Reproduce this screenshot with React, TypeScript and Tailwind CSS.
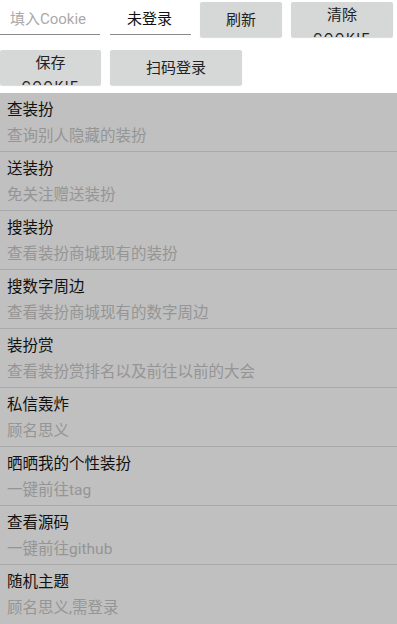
import React from 'react';

const items = [
  { title: '查装扮', desc: '查询别人隐藏的装扮' },
  { title: '送装扮', desc: '免关注赠送装扮' },
  { title: '搜装扮', desc: '查看装扮商城现有的装扮' },
  { title: '搜数字周边', desc: '查看装扮商城现有的数字周边' },
  { title: '装扮赏', desc: '查看装扮赏排名以及前往以前的大会' },
  { title: '私信轰炸', desc: '顾名思义' },
  { title: '晒晒我的个性装扮', desc: '一键前往tag' },
  { title: '查看源码', desc: '一键前往github' },
  { title: '随机主题', desc: '顾名思义,需登录' },
];

const Btn: React.FC<{ label: string; sub?: string; className?: string }> = ({ label, sub, className }) => (
  <button
    className={
      'h-[35px] bg-[#d6d7d7] rounded-[2px] shadow-[0_1px_1px_rgba(0,0,0,0.15)] overflow-hidden flex flex-col items-center text-[15px] text-[#222] ' +
      (sub ? 'pt-[3px] ' : 'justify-center ') +
      (className || '')
    }
  >
    <span className="leading-[20px]">{label}</span>
    {sub && <span className="tracking-[1.5px] text-[14px] leading-[16px] mt-[6px]">{sub}</span>}
  </button>
);

export default function App() {
  return (
    <div
      className="w-[397px] h-[624px] overflow-hidden bg-white"
      style={{ fontFamily: 'Roboto, "Noto Sans CJK SC", sans-serif' }}
    >
      <div className="flex items-start pt-[2px] h-[48px]">
        <div className="w-[100px] h-[33px] border-b border-[#8a8a8a] flex items-center pl-[10px] pt-[3px] text-[15px] text-[#aaaaaa]">
          填入Cookie
        </div>
        <div className="ml-[10px] w-[81px] h-[33px] border-b border-[#8a8a8a] flex items-center pl-[17px] pt-[3px] text-[15px] text-[#111]">
          未登录
        </div>
        <Btn label="刷新" className="ml-[9px] w-[82px]" />
        <Btn label="清除" sub="COOKIE" className="ml-[9px] w-[102px]" />
      </div>
      <div className="flex items-start pt-[2px] h-[45px]">
        <Btn label="保存" sub="COOKIE" className="w-[101px]" />
        <Btn label="扫码登录" className="ml-[9px] w-[132px]" />
      </div>
      <div className="bg-[#c0c0c0]">
        {items.map((it, i) => (
          <div
            key={i}
            className={'h-[59px] pl-[7px] flex flex-col ' + (i < items.length - 1 ? 'border-b border-[#a9a9a9]' : '')}
          >
            <div className="text-[15.5px] leading-[20px] mt-[7px] text-[#111]">{it.title}</div>
            <div className="text-[15.5px] leading-[20px] mt-[6px] text-[#959595]">{it.desc}</div>
          </div>
        ))}
      </div>
    </div>
  );
}
